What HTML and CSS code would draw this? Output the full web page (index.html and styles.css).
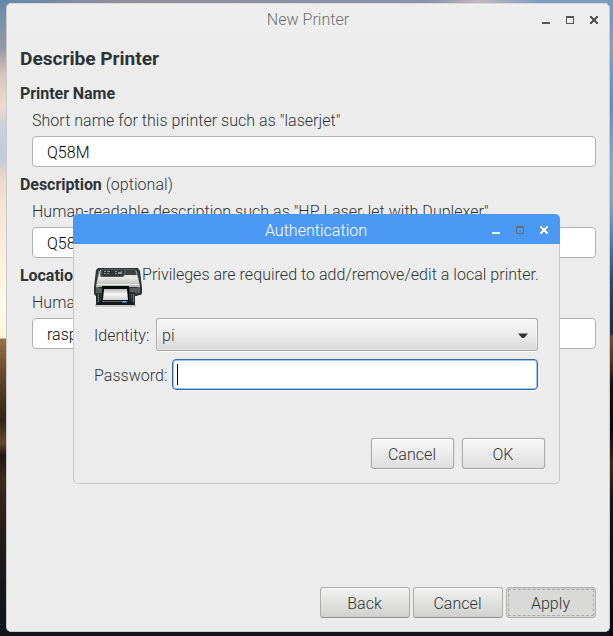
FILE: index.html
```html
<!DOCTYPE html>
<html lang="en">
<head>
<meta charset="utf-8">
<title>New Printer</title>
<link rel="stylesheet" href="styles.css">
</head>
<body>
<main class="window">
  <header class="titlebar">
    <span class="title">New Printer</span>
    <svg class="controls" width="58" height="10" viewBox="0 0 58 10" shape-rendering="crispEdges">
      <path class="fill" d="M1 7h8v2H1z"/>
      <path class="fill" fill-rule="evenodd" d="M25 1h8v8h-8zM26 3v5h6V3z"/>
      <path class="fill" d="M49 1h2v1h1v1h2V2h1V1h2v2h-1v1h-1v2h1v1h1v2h-2V8h-1V7h-2v1h-1v1h-2V7h1V6h1V4h-1V3h-1z"/>
    </svg>
  </header>
  <section class="form">
    <h1>Describe Printer</h1>
    <div class="field">
      <div class="label"><b>Printer Name</b></div>
      <div class="hint">Short name for this printer such as "laserjet"</div>
      <div class="entry">Q58M</div>
    </div>
    <div class="field">
      <div class="label"><b>Description</b> (optional)</div>
      <div class="hint">Human-readable description such as "HP LaserJet with Duplexer"</div>
      <div class="entry">Q58M</div>
    </div>
    <div class="field">
      <div class="label"><b>Location</b></div>
      <div class="hint">Human</div>
      <div class="entry">rasp</div>
    </div>
  </section>
  <footer class="actions">
    <button>Back</button><button>Cancel</button><button class="pressed">Apply</button>
  </footer>
</main>

<section class="dialog">
  <header class="titlebar active">
    <span class="title">Authentication</span>
    <svg class="controls" width="58" height="10" viewBox="0 0 58 10" shape-rendering="crispEdges">
      <path class="fill" d="M1 7h8v2H1z"/>
      <path class="muted" fill-rule="evenodd" d="M25 1h8v8h-8zM26 3v5h6V3z"/>
      <path class="fill" d="M49 1h2v1h1v1h2V2h1V1h2v2h-1v1h-1v2h1v1h1v2h-2V8h-1V7h-2v1h-1v1h-2V7h1V6h1V4h-1V3h-1z"/>
    </svg>
  </header>
  <div class="message">
    <svg width="48" height="42" viewBox="0 0 48 42">
      <defs>
        <linearGradient id="body" x1="0" y1="0" x2="0" y2="1"><stop offset="0" stop-color="#c4c5c1"/><stop offset=".45" stop-color="#e8e8e5"/><stop offset="1" stop-color="#b0b2ae"/></linearGradient>
        <linearGradient id="paper" x1="0" y1="0" x2="0" y2="1"><stop offset="0" stop-color="#b9bab8"/><stop offset=".5" stop-color="#f7f7f6"/><stop offset="1" stop-color="#cfd0ce"/></linearGradient>
      </defs>
      <path fill="#aaa" opacity=".5" d="M1 37h41v3H1z"/>
      <path fill="#2e3436" d="M4 1h40l2 3 2 17v5q0 2-3 2l-2 1H3q-3 0-3-3v-6L2 3z"/>
      <path fill="#656b6a" d="M4 3 2 20v6h2l2-22zM43 3l3 17v6h-2l-2-22z"/>
      <path fill="url(#body)" d="M6 3h36l4 16v1H2v-1z"/>
      <path fill="#535856" d="M7 2h34l2 6H31l-2 2H7L6 8z"/>
      <path fill="#303536" d="M8 3h22v4l-2 2H8z"/>
      <path fill="#909590" d="M10 4h2v1h-2zm3 0h3v1h-3zm-3 2h2v1h-2zm3 0h2v1h-2zm8-2h2v1h-2zm3 1h3v2h-3zm-3 1h2v1h-2zm6-2h1v3h-1z"/>
      <path fill="#3d4241" d="M31 3h10l1 5H31l1-3z"/>
      <path fill="#eeeeec" d="M3 17h42v1H3z"/>
      <path fill="#555b5b" d="M2 21h6v5H2zm34 0h10v5H36z"/>
      <path fill="#262d30" d="M2 27h6v11H2zm33-2h6v13h-6z"/>
      <path fill="#6b7373" d="M4 27h1v8H4zm35 0h1v8h-1z"/>
      <path fill="#090b0b" d="M8 19h27v14H8z"/>
      <path fill="url(#paper)" d="M10 22h23l1 11H9z"/>
      <path fill="#15191b" d="M7 33h29l4 5H3z"/>
      <path fill="#5c6466" d="M8 34h25v1H8z"/>
      <path fill="#346bb3" d="M28 34h5v2h-5z"/>
      <path fill="#80b3e6" d="M29 34h3v1h-3z"/>
      <path fill="#2861aa" d="M37 27h1v4h-1z"/>
    </svg>
    <p>Privileges are required to add/remove/edit a local printer.</p>
  </div>
  <div class="row"><span class="caption">Identity:</span>
    <div class="combo"><span>pi</span><svg width="10" height="6" viewBox="0 0 10 6"><path fill="#2e3436" d="M0 0.5h10L6 5H4z"/></svg></div>
  </div>
  <div class="row"><span class="caption">Password:</span><div class="entry focused"><i class="caret"></i></div></div>
  <footer class="dialog-actions"><button>Cancel</button><button>OK</button></footer>
</section>
</body>
</html>
```

FILE: styles.css
```css
* { box-sizing: border-box; }

body {
  margin: 0;
  height: 636px;
  padding: 3px 3px 4px 6px;
  overflow: hidden;
  font: 300 16px/20px Roboto, "Liberation Sans", sans-serif;
  letter-spacing: 0.03px;
  color: #2e3436;
  background:
    linear-gradient(#789dc3 0, #7096c3 20px, #8e9cb6 45px, #629dcc 75px, #5b8fb9 105px, #7da9c9 160px, #7fa5c2 200px, #4f88b8 235px, #294d70 280px, #1c2d40 334px, #6f4a32 336px, #553722 360px, #171310 382px, #080b0d 430px, #3a2819 465px, #11161b 500px, #080c12) right / 4px 100% no-repeat,
    linear-gradient(90deg, #6088ab, #948f9c 20%, #8793ad 70%, #c3b8be 78%, #7a9dc4 88%) top / 100% 4px no-repeat,
    linear-gradient(#6088ab 0, #7e93aa 25px, #9797a3 48px, #d9c4bb 75px, #f0d9ca 105px, #ccd0d9 125px, #c2cbd8 160px, #f0d7c9 180px, #f8e5d8 215px, #fff0dc 260px, #fffbe9 305px, #fff3da 338px, #977248 339px, #6c4b2b 370px, #332419 420px, #66472b 443px, #211b18 455px, #40281b 480px, #211c1b 540px, #15171c 600px, #10141b) left / 8px 100% no-repeat,
    #10141a;
}

.window {
  display: flex;
  flex-direction: column;
  width: 604px;
  height: 629px;
  background: #ececec;
  border: 1px solid #cacaca;
  border-top-color: #d8d8d8;
  border-radius: 5px;
}

.titlebar {
  display: flex;
  align-items: center;
  flex: none;
  height: 29px;
  padding: 2px 10px 0 68px;
  border-radius: 4px 4px 0 0;
  background: #eee;
  color: #6a6e70;
}
.title { flex: 1; text-align: center; }
.controls { flex: none; fill: #555; }
.muted { fill: #6a6e73; }

.form { padding: 15px 13px 0; }
h1 {
  margin: 0 0 10px;
  height: 22px;
  font-size: 19.2px;
  line-height: 22px;
  font-weight: 700;
  letter-spacing: -0.05px;
}
b { font-weight: 700; letter-spacing: -0.05px; }
.field { margin-bottom: 4px; }
.label { line-height: 27px; }
.hint { margin: 0 0 2px 12px; line-height: 27px; }
.entry {
  height: 31px;
  margin-left: 12px;
  padding: 0 14px;
  line-height: 31px;
  background: #fff;
  border: 1px solid #b2b2b2;
  border-radius: 4px;
  color: #000;
}

button {
  width: 90px;
  height: 31px;
  padding: 2px 1px 0 0;
  font: inherit;
  letter-spacing: inherit;
  color: #2e3436;
  border: 1px solid #acacac;
  border-bottom-color: #929292;
  border-radius: 3px;
  background: linear-gradient(#f2f2f2, #d0d0ce);
  box-shadow: inset 0 1px #fafafa;
}
.actions {
  display: flex;
  justify-content: flex-end;
  gap: 3px;
  margin: auto 13px 13px;
}
.pressed {
  background: #d9d9d7;
  border-color: #b2b2b2;
  box-shadow: inset 0 1px #ccc;
  outline: 1px dashed #aaa;
  outline-offset: -3px;
}

.dialog {
  position: absolute;
  left: 73px;
  top: 214px;
  width: 487px;
  height: 270px;
  background: #ececec;
  border: 1px solid #c8c8c8;
  border-top: 0;
  border-radius: 5px;
}
.active {
  height: 30px;
  margin: 0 -1px;
  padding: 2px 11px 0 68px;
  border-radius: 5px 5px 0 0;
  background: #4c98f5;
  color: #fff;
}
.active .title { padding-top: 1px; }
.active .controls { fill: #fff; }
.message {
  display: flex;
  height: 74px;
  padding: 23px 0 0 20px;
}
.message p { margin: -2px 0 0; white-space: nowrap; }
.row {
  display: flex;
  align-items: center;
  justify-content: space-between;
  margin: 0 21px 8px 20px;
}
.caption, .combo span { padding-top: 2px; }
.combo {
  display: flex;
  align-items: center;
  justify-content: space-between;
  width: 382px;
  height: 33px;
  padding: 0 9px 0 5px;
  border: 1px solid #acacac;
  border-bottom-color: #a2a2a2;
  border-radius: 3px;
  background: linear-gradient(#f7f7f7, #ececec 50%, #d8d8d8);
  box-shadow: inset 0 0 0 1px #ffffff55, 0 1px #fafafa;
}
.combo svg { margin-top: 3px; }
.focused {
  width: 366px;
  margin: 0;
  padding: 4px;
  border-color: #2f66b0;
  box-shadow: inset 0 0 0 1px #9cc4f5, 0 1px #fafafa;
}
.caret { display: block; width: 1px; height: 21px; background: #000; }
.dialog-actions {
  display: flex;
  justify-content: flex-end;
  gap: 8px;
  margin: 48px 14px 0;
}
.dialog-actions button {
  width: 83px;
  height: 31px;
  border-bottom-color: #a2a2a2;
  background: linear-gradient(#f8f8f8, #dedede);
  box-shadow: inset 0 1px #fff, 0 1px #fafafa, 0 0 0 1px #e2e2e2;
}
```
